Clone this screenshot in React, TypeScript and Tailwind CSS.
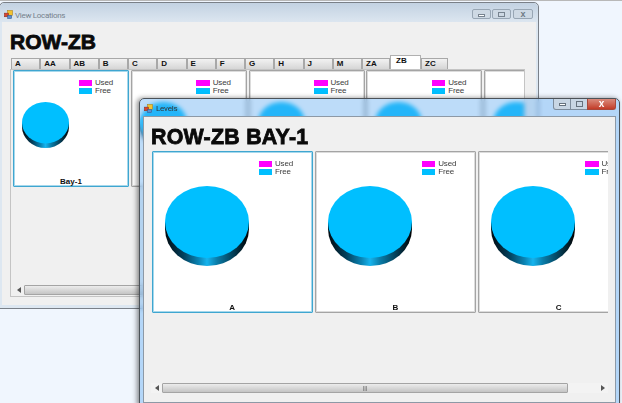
const tabs = ['A', 'AA', 'AB', 'B', 'C', 'D', 'E', 'F', 'G', 'H', 'J', 'M', 'ZA', 'ZB', 'ZC']

function WinIcon({ className }: { className: string }) {
  return (
    <svg width="9" height="9" viewBox="0 0 10 10" className={`shrink-0 ${className}`}>
      <rect x="4" y="0.5" width="5.5" height="5.5" fill="#f2c230" stroke="#a87f18" strokeWidth="0.6" />
      <rect x="0.5" y="3.5" width="4.5" height="4" fill="#d8452f" stroke="#8c2a1c" strokeWidth="0.6" />
      <rect x="4" y="6" width="4.5" height="3.5" fill="#5a8fd0" stroke="#38598a" strokeWidth="0.6" />
    </svg>
  )
}

function Pie({ className }: { className: string }) {
  return (
    <svg viewBox="0 0 84 80" preserveAspectRatio="none" className={className}>
      <defs>
        <linearGradient id="pieSide" x1="0" x2="1" y1="0" y2="0">
          <stop offset="0" stopColor="#00090f" />
          <stop offset="0.22" stopColor="#03405c" />
          <stop offset="0.4" stopColor="#0a84b4" />
          <stop offset="0.5" stopColor="#16b4ee" />
          <stop offset="0.62" stopColor="#0a7ca8" />
          <stop offset="0.82" stopColor="#033c54" />
          <stop offset="1" stopColor="#000000" />
        </linearGradient>
      </defs>
      <path d="M0 36 V43 A42 37 0 0 0 84 43 V36 Z" fill="url(#pieSide)" />
      <ellipse cx="42" cy="36" rx="42" ry="36" fill="#00bfff" />
    </svg>
  )
}

function Legend({ className }: { className: string }) {
  return (
    <div className={`flex flex-col gap-[2px] text-[8px] leading-[6px] tracking-[-0.2px] text-[#3c3c3c] ${className}`}>
      <div className="flex items-center gap-[3px]">
        <span className="h-[6px] w-[13.5px] shrink-0 bg-[#ff00ff]" />
        <span>Used</span>
      </div>
      <div className="flex items-center gap-[3px]">
        <span className="h-[6px] w-[13.5px] shrink-0 bg-[#00bfff]" />
        <span>Free</span>
      </div>
    </div>
  )
}

function cardFrame(active?: boolean) {
  return active
    ? 'border-[#3fa6d0] shadow-[inset_0_0_0_1px_#a6d8ec]'
    : 'border-[#a4a4a4] shadow-[inset_0_0_0_1px_#dcdcdc]'
}

function SmallCard({ label, active }: { label?: string; active?: boolean }) {
  return (
    <div className={`flex h-[117px] w-[116px] shrink-0 flex-col rounded-[1px] border bg-white ${cardFrame(active)}`}>
      <div className="flex flex-1 items-start">
        <Pie className="ml-[8px] mt-[31px] h-[46px] w-[47px] shrink-0" />
        <Legend className="ml-[9.5px] mt-[9px]" />
      </div>
      {label && <div className="h-[9px] text-center text-[8px] font-bold leading-[9px] text-[#111]">{label}</div>}
    </div>
  )
}

function BigCard({ label, active }: { label: string; active?: boolean }) {
  return (
    <div className={`flex h-[162px] w-[161.5px] shrink-0 flex-col rounded-[1px] border bg-white ${cardFrame(active)}`}>
      <div className="flex flex-1 items-start">
        <Pie className="ml-[12px] mt-[34px] h-[80px] w-[84px] shrink-0" />
        <Legend className="ml-[10px] mt-[9px]" />
      </div>
      <div className="h-[9px] text-center text-[8px] font-bold leading-[9px] text-[#111]">{label}</div>
    </div>
  )
}

function ScrollArrow({ dir }: { dir: 'l' | 'r' }) {
  return (
    <svg width="4" height="6" viewBox="0 0 4 6">
      <path d={dir === 'l' ? 'M4 0 L0 3 L4 6 Z' : 'M0 0 L4 3 L0 6 Z'} fill="#555" />
    </svg>
  )
}

function Thumb({ className, grip }: { className: string; grip?: boolean }) {
  return (
    <div className={`flex items-center justify-center rounded-[1px] border border-[#a4a4a4] bg-gradient-to-b from-[#ececec] to-[#c4c4c4] ${className}`}>
      {grip && <span className="text-[6px] leading-none text-[#555]">|||</span>}
    </div>
  )
}

export default function App() {
  return (
    <div className="relative h-[403px] w-[622px] overflow-hidden border-t border-[#b8b8b8] bg-[#f0f6fe] font-['Liberation_Sans',Arial,sans-serif] blur-[0.4px]">
      {/* back window */}
      <div className="absolute left-[-1px] top-[1px] flex h-[307px] w-[540px] flex-col rounded-t-[5px] border border-[#7a8088] bg-[#dde7f1]">
        <div className="flex h-[19px] shrink-0 items-start rounded-t-[5px] bg-gradient-to-b from-[#c3d2e2] to-[#dce6f0] pl-[4px] pr-[5px] pt-[6px]">
          <WinIcon className="mt-[1px]" />
          <span className="ml-[2px] mt-[2px] font-['Roboto',sans-serif] text-[8px] leading-[10px] tracking-[-0.3px] text-[#76818c]">View Locations</span>
          <div className="ml-auto flex">
            <div className="mr-[1px] flex h-[10px] w-[19px] items-end justify-center rounded-[2px] border border-[#98a6b4] bg-[#ced9e4] pb-[1px]">
              <span className="h-[3px] w-[7px] border border-[#77838f] bg-white" />
            </div>
            <div className="mr-[2px] flex h-[10px] w-[19px] items-center justify-center rounded-[2px] border border-[#98a6b4] bg-[#ced9e4]">
              <span className="h-[5px] w-[7px] border border-[#77838f]" />
            </div>
            <div className="flex h-[10px] w-[20px] items-center justify-center rounded-[2px] border border-[#98a6b4] bg-[#ced9e4] text-[9px] font-bold leading-none text-[#6f7a85]">
              x
            </div>
          </div>
        </div>
        <div className="mx-[2px] mb-[3px] flex flex-1 flex-col bg-[#f0f0f0] pl-[8px] pt-[8px]">
          <h1 className="mb-[2px] h-[24px] text-[21px] font-bold leading-[23px] text-[#0a0a0a] [-webkit-text-stroke:0.8px_#0a0a0a]">ROW-ZB</h1>
          <div className="relative z-10 ml-[1px] flex h-[13px] items-end text-[8px] font-bold text-[#111]">
            {tabs.map((tab) =>
              tab === 'ZB' ? (
                <div key={tab} className="h-[14px] w-[31px] shrink-0 border border-b-0 border-[#b0b0b0] bg-white pl-[5px] leading-[10px]">{tab}</div>
              ) : (
                <div key={tab} className={`h-[11px] shrink-0 border border-b-0 border-[#a8a8a8] bg-gradient-to-b from-[#f2f2f2] to-[#d6d6d6] pl-[3px] leading-[10px] ${tab === 'ZA' ? 'w-[28px]' : tab === 'ZC' ? 'w-[27px]' : 'w-[29.25px]'}`}>{tab}</div>
              ),
            )}
          </div>
          <div className="flex h-[228px] w-[515px] flex-col border border-[#c4c4c4] pl-[2px]">
            <div className="flex flex-1 gap-[1.75px] overflow-hidden">
              <SmallCard label="Bay-1" active />
              <SmallCard />
              <SmallCard />
              <SmallCard />
              <SmallCard />
            </div>
            <div className="mb-[1px] flex h-[10px] w-[510px] items-center bg-[#f0f0f0]">
              <div className="flex w-[11px] justify-center"><ScrollArrow dir="l" /></div>
              <Thumb className="h-[10px] w-[300px]" />
            </div>
          </div>
        </div>
      </div>

      {/* front window */}
      <div className="absolute left-[139px] top-[97px] flex h-[308px] w-[481px] flex-col rounded-t-[5px] border border-[#4c5258] bg-[#5aa8ef]/40 shadow-[-2px_0_5px_rgba(0,0,0,0.45)] backdrop-blur-[2px]">
        <div className="flex h-[17px] shrink-0 items-start pl-[4px] pr-[3px]">
          <WinIcon className="mt-[5px]" />
          <span className="ml-[3px] mt-[5px] font-['Roboto',sans-serif] text-[8px] leading-[10px] tracking-[-0.2px] text-[#333]">Levels</span>
          <div className="ml-auto flex">
            <div className="flex h-[11px] w-[18px] items-center justify-center rounded-bl-[3px] border border-t-0 border-[#7d8c9c] bg-[#c8d6e4]">
              <span className="h-[3px] w-[7px] border border-[#66727e] bg-white" />
            </div>
            <div className="flex h-[11px] w-[16px] items-center justify-center border-b border-[#7d8c9c] bg-[#c8d6e4]">
              <span className="h-[6px] w-[7px] border border-[#66727e]" />
            </div>
            <div className="flex h-[11px] w-[29px] items-center justify-center rounded-br-[3px] border border-t-0 border-[#a8483a] bg-gradient-to-b from-[#d98a7c] to-[#c23a26] text-[10px] font-bold leading-none text-white">
              x
            </div>
          </div>
        </div>
        <div className="mx-[3px] mb-[2px] flex flex-1 flex-col border border-[#8d99a6] bg-[#f0f0f0] pl-[7px] pt-[8px]">
          <h1 className="mb-[2px] h-[24px] text-[21.4px] font-bold leading-[24px] tracking-[0.25px] text-[#0a0a0a] [-webkit-text-stroke:0.8px_#0a0a0a]">ROW-ZB BAY-1</h1>
          <div className="flex w-[457px] gap-[1.75px] overflow-hidden pl-[0.5px]">
            <BigCard label="A" active />
            <BigCard label="B" />
            <BigCard label="C" />
          </div>
          <div className="mt-[70px] flex h-[10px] w-[457px] items-center bg-[#f3f3f3]">
            <div className="flex w-[11px] justify-center"><ScrollArrow dir="l" /></div>
            <Thumb className="h-[10px] w-[406px]" grip />
            <div className="flex flex-1 justify-end pr-[3px]"><ScrollArrow dir="r" /></div>
          </div>
        </div>
      </div>
    </div>
  )
}
